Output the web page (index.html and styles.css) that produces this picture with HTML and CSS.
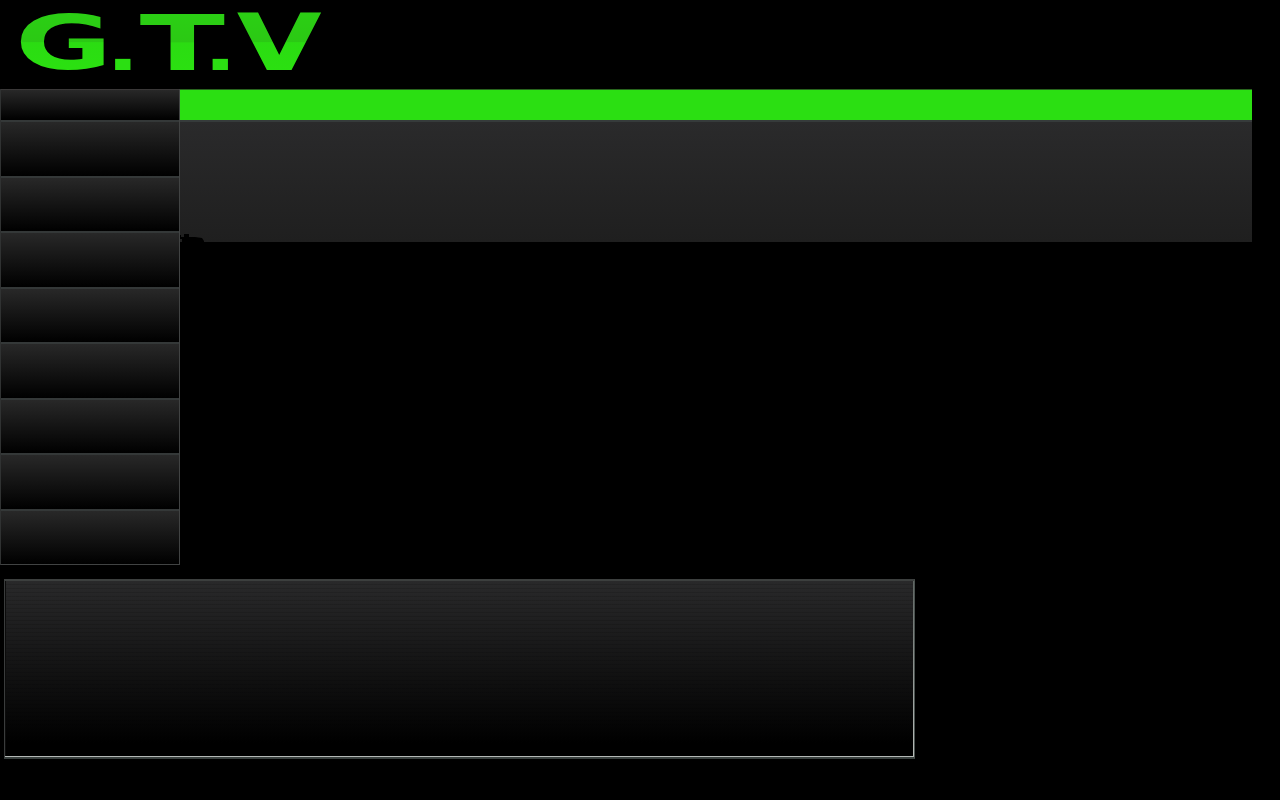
FILE: index.html
```html
<!DOCTYPE html>
<html lang="en">
<head>
<meta charset="utf-8">
<title>G.T.V</title>
<link rel="stylesheet" href="styles.css">
</head>
<body>
<header class="header">
  <svg class="logo" width="340" height="89" viewBox="0 0 340 89" role="img" aria-label="G.T.V">
    <defs>
      <linearGradient id="shine" gradientUnits="userSpaceOnUse" x1="0" y1="-57" x2="0" y2="0">
        <stop offset="0" stop-color="#2bcf14"/>
        <stop offset=".5" stop-color="#2bc914"/>
        <stop offset=".52" stop-color="#2bdc12"/>
        <stop offset="1" stop-color="#2be011"/>
      </linearGradient>
    </defs>
    <text class="letter" transform="translate(15 69.2) scale(1.53 .97)">G</text>
    <text class="dot" transform="translate(106.3 70) scale(1.5 1)">.</text>
    <text class="letter" transform="translate(139.7 70) scale(1.61 .99)">T</text>
    <text class="dot" transform="translate(203.8 70) scale(1.5 1)">.</text>
    <text class="letter" transform="translate(236.8 70) scale(1.415 1)">V</text>
  </svg>
</header>
<main class="layout">
  <nav class="menu">
    <div class="menu-head"></div>
    <div class="menu-item"></div>
    <div class="menu-item"></div>
    <div class="menu-item"></div>
    <div class="menu-item"></div>
    <div class="menu-item"></div>
    <div class="menu-item"></div>
    <div class="menu-item"></div>
    <div class="menu-item"></div>
  </nav>
  <section class="content">
    <div class="green-bar"></div>
    <div class="panel">
      <svg class="notch" width="26" height="10" viewBox="0 0 26 10" aria-hidden="true">
        <path d="M0 3h1v2h3V2h5v3h6l7 1 2 3v1H2V7H0z"/>
      </svg>
    </div>
  </section>
</main>
<footer class="footer-box"></footer>
</body>
</html>
```

FILE: styles.css
```css
* { box-sizing: border-box; }

body {
  margin: 0;
  height: 800px;
  overflow: hidden;
  background: #000;
  font-family: "DejaVu Sans", sans-serif;
}

.header { height: 89px; }
.logo { display: block; }

.letter,
.dot {
  font-family: "DejaVu Sans", sans-serif;
  font-weight: bold;
  font-size: 77.5px;
  fill: url(#shine);
}

.dot {
  font-size: 58px;
  fill: #2bdf12;
}

.layout {
  display: flex;
  width: 1252px;
  height: 476px;
}

.menu {
  width: 180px;
  display: grid;
  grid-template-rows: 31px repeat(8, 55.5px);
  height: 476px;
  border-right: 1px solid #414343;
  border-left: 1px solid #303232;
  border-bottom: 1px solid #414343;
}

.menu-head,
.menu-item {
  border-top: 2px solid #343838;
  background: linear-gradient(#282828, #000);
}

.menu-head { border-top: 1px solid #3a3838; }

.content { flex: 1; }

.green-bar {
  height: 31px;
  border-top: 1px solid #28651d;
  background: #2bdf12;
}

.panel {
  position: relative;
  height: 122px;
  border-top: 2px solid #363b3b;
  background: linear-gradient(#2a2a2b, #1f1f1f);
}

.notch {
  position: absolute;
  left: 0;
  bottom: 0;
  fill: #000;
}

.footer-box {
  width: 911px;
  height: 180px;
  margin: 14px 0 0 4px;
  border-style: solid;
  border-width: 2px 1px 2px 1px;
  border-color: #3c3f3e #4b5350 #39403e #3a3c3c;
  background:
    linear-gradient(#b4b9b6, #b4b9b6) bottom / 100% 1px no-repeat,
    linear-gradient(#606663, #b8bcb9) right / 1px 100% no-repeat,
    linear-gradient(#0c0c0c, #0c0c0c) left / 1px 100% no-repeat,
    repeating-linear-gradient(transparent 0 3px, rgba(0, 0, 0, .13) 3px 4px),
    linear-gradient(#29292a, #000 92%);
}
```
